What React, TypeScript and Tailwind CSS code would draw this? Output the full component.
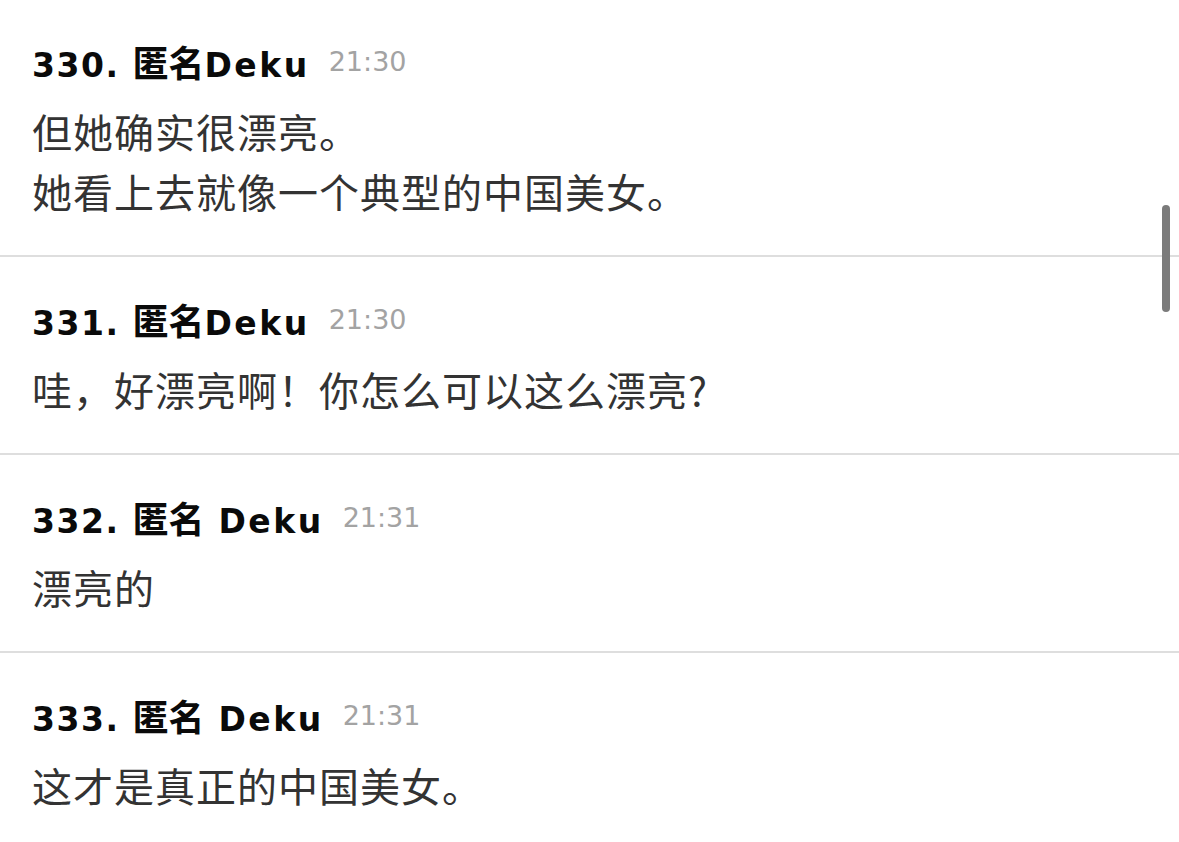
import React from 'react';

type Post = {
  no: number;
  cjk: string;
  latin: string;
  time: string;
  lines: string[];
};

const POSTS: Post[] = [
  { no: 330, cjk: '匿名', latin: 'Deku', time: '21:30', lines: ['但她确实很漂亮。', '她看上去就像一个典型的中国美女。'] },
  { no: 331, cjk: '匿名', latin: 'Deku', time: '21:30', lines: ['哇，好漂亮啊！你怎么可以这么漂亮?'] },
  { no: 332, cjk: '匿名', latin: ' Deku', time: '21:31', lines: ['漂亮的'] },
  { no: 333, cjk: '匿名', latin: ' Deku', time: '21:31', lines: ['这才是真正的中国美女。'] },
];

const headFont = { fontFamily: '"DejaVu Sans", "Noto Sans CJK SC", sans-serif' };
const cjkFont = { fontFamily: '"Noto Sans CJK SC", sans-serif' };
const bodyFont = { fontFamily: '"Noto Sans CJK SC", "Noto Sans", sans-serif' };

export default function App() {
  return (
    <div className="relative w-[1179px] h-[842px] overflow-hidden bg-white">
      {POSTS.map((post, idx) => (
        <div
          key={post.no}
          className={`pl-8 pb-[34px] border-b-2 border-[#dedede] ${idx === 0 ? 'pt-[38px]' : 'pt-[39px]'}`}
        >
          {/* post header: number, name, time */}
          <div className="flex items-center h-[48px] whitespace-pre" style={headFont}>
            <span className="text-[33px] font-bold text-[#0a0a0a] tracking-[1.5px]">
              {post.no}.{' '}
              <span className="text-[36px] tracking-normal" style={cjkFont}>
                {post.cjk}
              </span>
              <span className="tracking-[2.5px]">{post.latin}</span>
            </span>
            <span className="ml-[19px] text-[27px] text-[#a3a3a3]">{post.time}</span>
          </div>
          <div className="mt-[15px] text-[40px] leading-[60px] tracking-[1px] text-[#333]" style={bodyFont}>
            {post.lines.map((line) => (
              <div key={line}>{line}</div>
            ))}
          </div>
        </div>
      ))}

      {/* scroll indicator */}
      <div className="absolute left-[1162px] top-[205px] w-[8px] h-[107px] rounded-full bg-[#7b7b7b]" />
    </div>
  );
}
